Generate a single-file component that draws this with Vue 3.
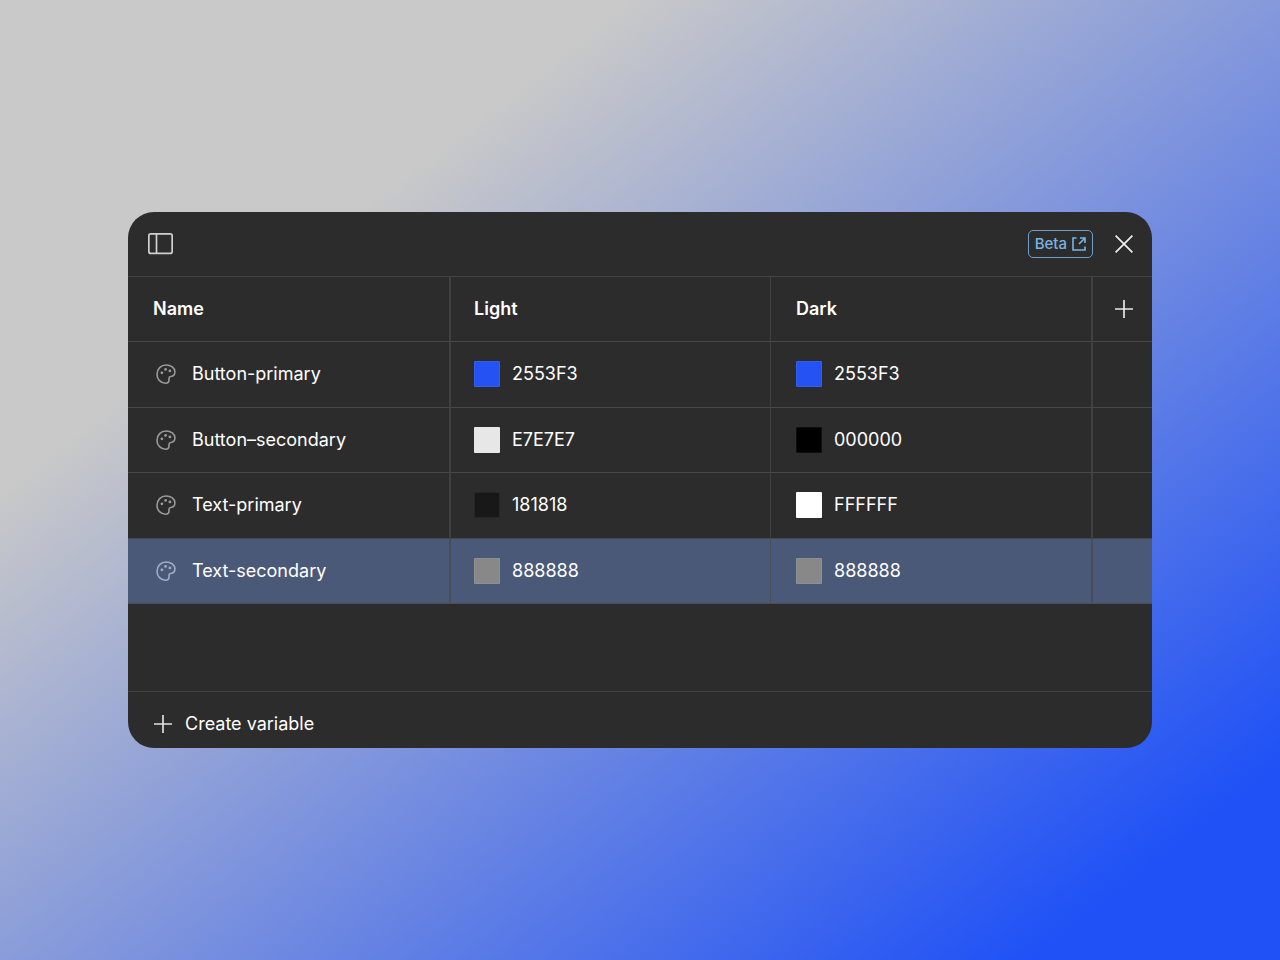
<script setup>
const variables = [
  { name: 'Button-primary', light: '2553F3', dark: '2553F3' },
  { name: 'Button–secondary', light: 'E7E7E7', dark: '000000' },
  { name: 'Text-primary', light: '181818', dark: 'FFFFFF' },
  { name: 'Text-secondary', light: '888888', dark: '888888', selected: true },
]
</script>

<template>
  <main class="page">
    <section class="panel">
      <header class="topbar">
        <button class="icon-button" type="button" aria-label="Toggle sidebar">
          <svg width="25" height="22" viewBox="0 0 25 22" fill="none" stroke="#cfcfcf" stroke-width="1.7">
            <rect x="0.85" y="0.85" width="23.300" height="19.600" rx="2" />
            <path d="M8.500 1v19.500" />
          </svg>
        </button>
        <div class="actions">
          <a class="beta" href="#">
            Beta
            <svg width="14" height="14" viewBox="0 0 14 14" fill="none" stroke="currentColor" stroke-width="1.6">
              <path d="M4.500 1H1v12h12V9.500" />
              <path d="M8 1h5v5M13 1L7 7" />
            </svg>
          </a>
          <button class="icon-button" type="button" aria-label="Close">
            <svg width="18" height="18" viewBox="0 0 18 18" fill="none" stroke="#f0f0f0" stroke-width="1.7">
              <path d="M.6 .6l16.8 16.8M17.4 .6L.6 17.4" />
            </svg>
          </button>
        </div>
      </header>

      <table class="variables">
        <colgroup>
          <col /><col /><col />
          <col class="add-col" />
        </colgroup>
        <thead>
          <tr>
            <th scope="col">Name</th>
            <th scope="col">Light</th>
            <th scope="col">Dark</th>
            <th scope="col" class="add-cell">
              <button class="icon-button" type="button" aria-label="Add mode">
                <svg width="18" height="18" viewBox="0 0 18 18" fill="none" stroke="#e8e8e8" stroke-width="1.7">
                  <path d="M9 0v18M0 9h18" />
                </svg>
              </button>
            </th>
          </tr>
        </thead>
        <tbody>
          <tr v-for="item in variables" :key="item.name" :class="{ selected: item.selected }">
            <td>
              <div class="name">
                <svg class="palette" width="20" height="20" viewBox="0 0 20 20" fill="none">
                  <path
                    d="M10 1C15 1 18.9 4 18.9 7.8C18.9 11 17 12.4 14.8 12.5C13.4 12.6 13 13.2 13 14.4V16C13 18 11.6 19.2 9.6 19.2C4.8 19.2 1 15.400 1 10.400C1 5 5 1 10 1Z"
                    stroke="currentColor"
                    stroke-width="1.6"
                  />
                  <g fill="currentColor">
                    <circle cx="5.900" cy="8.800" r="1.400" />
                    <circle cx="9.600" cy="5.400" r="1.400" />
                    <circle cx="13.900" cy="6.900" r="1.400" />
                  </g>
                </svg>
                {{ item.name }}
              </div>
            </td>
            <td v-for="mode in ['light', 'dark']" :key="mode">
              <div class="value">
                <span class="swatch" :style="{ backgroundColor: '#' + item[mode] }"></span>
                {{ item[mode] }}
              </div>
            </td>
            <td></td>
          </tr>
        </tbody>
      </table>

      <footer class="footer">
        <button class="create" type="button">
          <svg width="18" height="18" viewBox="0 0 18 18" fill="none" stroke="#e0e0e0" stroke-width="1.7">
            <path d="M9 0v18M0 9h18" />
          </svg>
          Create variable
        </button>
      </footer>
    </section>
  </main>
</template>

<style>
body {
  margin: 0;
}
</style>

<style scoped>
.page {
  box-sizing: border-box;
  min-height: 100vh;
  padding: 32px 10%;
  display: flex;
  align-items: center;
  background: linear-gradient(142deg, #c9c9c9 25%, #1f51f6 90%);
  font-family: Inter, 'Liberation Sans', sans-serif;
  font-size: 18px;
  line-height: 24px;
  font-weight: 400;
  color: #fff;
}

.panel {
  flex: 1;
  overflow: hidden;
  border-radius: 26px;
  background: #2c2c2c;
}

.topbar {
  display: flex;
  align-items: center;
  justify-content: space-between;
  height: 64px;
  padding: 0 19px 0 20px;
  border-bottom: 1px solid #444;
}

.actions {
  display: flex;
  align-items: center;
  gap: 22px;
}

button {
  padding: 0;
  border: 0;
  background: none;
  color: inherit;
  font: inherit;
  cursor: pointer;
}

.icon-button {
  display: flex;
}

.beta {
  display: flex;
  align-items: center;
  gap: 5px;
  padding: 0 6px;
  border: 1px solid #6f9fc6;
  border-radius: 5px;
  color: #79b4e3;
  font-size: 15px;
  font-weight: 500;
  line-height: 26px;
  text-decoration: none;
}

.variables {
  width: 100%;
  table-layout: fixed;
  border-spacing: 0;
  margin-bottom: 87px;
}

.add-col {
  width: 61px;
}

th,
td {
  box-sizing: border-box;
  height: 65px;
  padding: 0 0 0 23px;
  border-left: 2px solid #404040;
  border-bottom: 1px solid #484848;
  text-align: left;
}

th:first-child,
td:first-child {
  padding-left: 25px;
  border-left: 0;
}

th:nth-child(3),
td:nth-child(3) {
  padding-left: 25px;
  border-left-width: 1px;
}

th {
  font-weight: 600;
  color: #fff;
}

.add-cell {
  padding-left: 22px;
}

tbody tr:nth-child(odd) td {
  height: 66px;
  padding-bottom: 1px;
}

.selected td {
  background: #4b5979;
  border-color: #4a4c5a;
}

.name {
  display: flex;
  align-items: center;
  gap: 16px;
  padding-left: 3px;
}

.palette {
  color: #9a9a9a;
}

.selected .palette {
  color: #a3acc4;
}

.value {
  display: flex;
  align-items: center;
  gap: 12px;
}

.swatch {
  box-sizing: border-box;
  width: 26px;
  height: 26px;
  border: 1px solid rgba(255, 255, 255, 0.06);
  border-radius: 1px;
}

.footer {
  padding: 20px 26px 12px;
  border-top: 1px solid #444;
}

.create {
  display: flex;
  align-items: center;
  gap: 13px;
}
</style>
